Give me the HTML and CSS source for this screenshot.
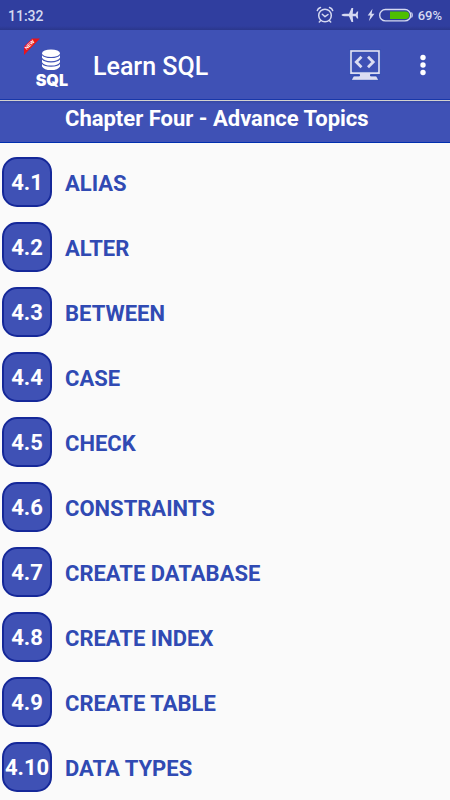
FILE: index.html
```html
<!DOCTYPE html>
<html lang="en">
<head>
<meta charset="utf-8">
<meta name="viewport" content="width=device-width, initial-scale=1">
<title>Learn SQL</title>
<link rel="stylesheet" href="styles.css">
</head>
<body>
<div class="status">
  <span class="clock">11:32</span>
  <div class="indicators">
    <svg class="alarm" width="18" height="18" viewBox="0 0 18 18" fill="none" stroke="currentColor" stroke-width="1.5" stroke-linecap="round" stroke-linejoin="round" aria-hidden="true"><circle cx="9" cy="9.5" r="6.3"/><path d="M6.3 8.3 9 10.7l3-2.2M1.3 4.5Q2 2.3 4.5 1.5M16.7 4.5Q16 2.3 13.5 1.5M4.5 14.8 3.3 16M13.5 14.8l1.2 1.2"/></svg>
    <svg class="plane" width="18" height="16" viewBox="0 0 18 16" fill="currentColor" aria-hidden="true"><path d="M.3 8Q1.500 6.700 3.500 6.700H8L10.500 1h1.700l-.5 5.700h3L16 4.500h1.200L16.800 8l.4 3.500H16l-1.300-2.200h-3l.5 5.700h-1.700L8 9.300H3.500Q1.500 9.300.3 8Z"/></svg>
    <svg class="bolt" width="8" height="14" viewBox="0 0 8 14" fill="currentColor" aria-hidden="true"><path d="M5.500.8.7 7.500h2.700L1.800 13.200 7.500 5.800H4.600Z"/></svg>
    <svg class="battery" width="34" height="14" viewBox="0 0 34 14" aria-hidden="true"><rect x=".7" y="1.500" width="31" height="11.400" rx="5.700" fill="none" stroke="currentColor" stroke-width="1.400"/><path d="M32.500 4.500q1.500 2.500 0 5" fill="none" stroke="currentColor" stroke-width="1.200"/><path d="M11 3.500h15.500a3.700 3.700 0 0 1 0 7.400H11Z" fill="#4ebf00"/></svg>
    <span class="percent">69%</span>
  </div>
</div>
<header class="appbar">
  <div class="logo">
    <svg class="ribbon" width="18" height="18" viewBox="0 0 18 18" aria-hidden="true"><path d="M9 .500H17L1 17V8.500Z" fill="#e8141c"/><text class="ribbon-text" x="0" y="0" text-anchor="middle" transform="translate(7.800 8) rotate(-45)">NEW</text></svg>
    <svg class="database" width="20" height="22" viewBox="0 0 20 22" fill="#fff" aria-hidden="true"><ellipse cx="10" cy="4.300" rx="9" ry="3.800"/><path d="M1 6.200Q3 9 10 9t9-2.800v2.600q-2 3.400-9 3.400T1 8.800ZM1 10.600q2 2.800 9 2.800t9-2.800v2.600q-2 3.400-9 3.400t-9-3.400ZM1 15q2 2.800 9 2.800t9-2.800v2.400q-2 3.600-9 3.600t-9-3.600Z"/></svg>
    <span class="logo-name">SQL</span>
  </div>
  <h1 class="title">Learn SQL</h1>
  <button class="icon-button code" type="button" aria-label="Code editor">
    <svg width="32" height="32" viewBox="0 0 32 32" aria-hidden="true"><path fill="#dcddf2" stroke="#1837a9" stroke-width=".7" fill-rule="evenodd" d="M.7.700H31.300V25.500H21.500V27H27.500L29.800 31.300H2.200L4.500 27H10.500V25.500H.7ZM3.300 3.300V22.800H28.700V3.300Z"/><path d="M12.500 7.800 7.300 13l5.200 5.200M19 7.800 24.200 13 19 18.200" fill="none" stroke="#dcddf2" stroke-width="2.800"/></svg>
  </button>
  <button class="icon-button more" type="button" aria-label="More options">
    <svg width="6" height="22" viewBox="0 0 6 22" fill="#fff" aria-hidden="true"><circle cx="3" cy="3.500" r="2.700"/><circle cx="3" cy="11" r="2.700"/><circle cx="3" cy="18.500" r="2.700"/></svg>
  </button>
</header>
<main>
  <h2 class="chapter">Chapter Four - Advance Topics</h2>
  <ul class="topics">
    <li><a class="topic" href="#"><span class="badge">4.1</span><span class="name">ALIAS</span></a></li>
    <li><a class="topic" href="#"><span class="badge">4.2</span><span class="name">ALTER</span></a></li>
    <li><a class="topic" href="#"><span class="badge">4.3</span><span class="name">BETWEEN</span></a></li>
    <li><a class="topic" href="#"><span class="badge">4.4</span><span class="name">CASE</span></a></li>
    <li><a class="topic" href="#"><span class="badge">4.5</span><span class="name">CHECK</span></a></li>
    <li><a class="topic" href="#"><span class="badge">4.6</span><span class="name">CONSTRAINTS</span></a></li>
    <li><a class="topic" href="#"><span class="badge">4.7</span><span class="name">CREATE DATABASE</span></a></li>
    <li><a class="topic" href="#"><span class="badge">4.8</span><span class="name">CREATE INDEX</span></a></li>
    <li><a class="topic" href="#"><span class="badge">4.9</span><span class="name">CREATE TABLE</span></a></li>
    <li><a class="topic" href="#"><span class="badge">4.10</span><span class="name">DATA TYPES</span></a></li>
  </ul>
</main>
</body>
</html>
```

FILE: styles.css
```css
* {
  box-sizing: border-box;
}

body {
  margin: 0;
  background: #fafafa;
  color: #304ab3;
  font-family: Roboto, sans-serif;
}

.status {
  display: flex;
  justify-content: space-between;
  align-items: center;
  height: 30px;
  padding: 0 8px;
  background: linear-gradient(#303e9f 26px, #2a378c);
  color: #d5d9f1;
  font-size: 14px;
  font-weight: 500;
}

.clock,
.percent {
  padding-top: 1px;
}

.indicators {
  display: flex;
  align-items: center;
}

.plane {
  margin-left: 7px;
}

.bolt {
  margin-left: 8px;
}

.battery {
  margin: 0 5px 0 4px;
}

.percent {
  font-size: 13px;
}

.appbar {
  display: flex;
  align-items: center;
  height: 70px;
  padding: 0 21px 0 22px;
  border-bottom: 1px solid #1837a9;
  background: #3f51b5;
  color: #fff;
}

.logo {
  position: relative;
  display: flex;
  flex-direction: column;
  align-items: flex-end;
  width: 46px;
  padding-top: 8px;
}

.ribbon {
  position: absolute;
  top: -3px;
  left: 1px;
}

.ribbon-text {
  fill: #fff;
  font: bold 5px "Liberation Sans", sans-serif;
}

.database {
  margin-right: 7px;
}

.logo-name {
  font: 900 16px/18px Inter, sans-serif;
}

.title {
  flex: 1;
  margin: 0 0 0 25px;
  padding-top: 3px;
  font-size: 25px;
  font-weight: 500;
}

.icon-button {
  display: flex;
  padding: 0;
  border: 0;
  background: none;
}

.more {
  margin-left: 36px;
  padding: 0 3px;
}

.chapter {
  height: 43px;
  margin: 0;
  padding: 3px 0 0 65px;
  border-top: 1px solid #d3d2cf;
  border-bottom: 1px solid #002fae;
  background: linear-gradient(#3547a4, #3f51b5 3px);
  color: #fff;
  font-size: 22px;
  font-weight: 700;
  line-height: 29px;
}

.topics {
  margin: 0;
  padding: 6px 0 0;
  list-style: none;
}

.topic {
  display: flex;
  align-items: center;
  gap: 13px;
  height: 65px;
  padding: 0 2px;
  color: inherit;
  font-size: 22px;
  font-weight: 700;
  text-decoration: none;
}

.name {
  padding-top: 3px;
}

.badge {
  display: flex;
  align-items: center;
  justify-content: center;
  width: 50px;
  height: 50px;
  padding-top: 2px;
  border: 2px solid #152899;
  border-radius: 15px;
  background: #3f51b5;
  color: #fff;
}
```
